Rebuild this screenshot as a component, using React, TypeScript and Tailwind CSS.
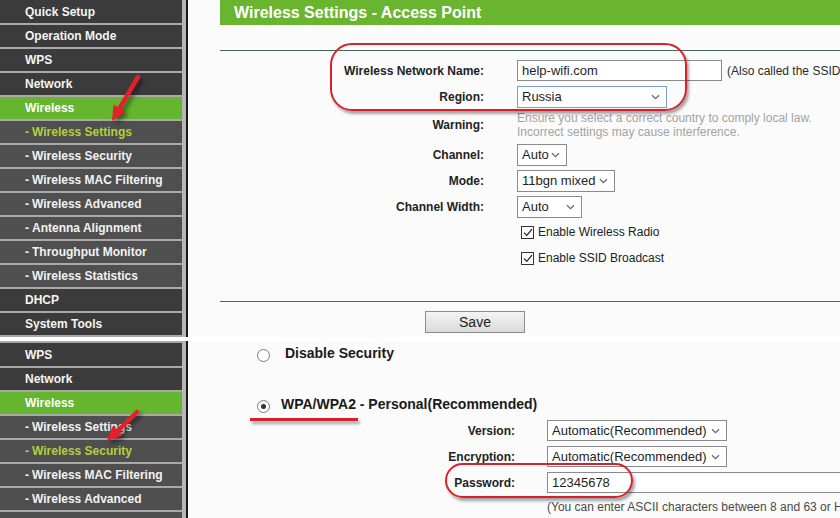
import type { ReactNode } from 'react'

type MenuItem = { label: string; kind: 'main' | 'sub' | 'open'; active?: boolean }

const TOP_MENU: MenuItem[] = [
  { label: 'Quick Setup', kind: 'main' },
  { label: 'Operation Mode', kind: 'main' },
  { label: 'WPS', kind: 'main' },
  { label: 'Network', kind: 'main' },
  { label: 'Wireless', kind: 'open' },
  { label: 'Wireless Settings', kind: 'sub', active: true },
  { label: 'Wireless Security', kind: 'sub' },
  { label: 'Wireless MAC Filtering', kind: 'sub' },
  { label: 'Wireless Advanced', kind: 'sub' },
  { label: 'Antenna Alignment', kind: 'sub' },
  { label: 'Throughput Monitor', kind: 'sub' },
  { label: 'Wireless Statistics', kind: 'sub' },
  { label: 'DHCP', kind: 'main' },
  { label: 'System Tools', kind: 'main' },
]

// last row only peeks in at the bottom edge
const BOTTOM_MENU: MenuItem[] = [
  { label: 'WPS', kind: 'main' },
  { label: 'Network', kind: 'main' },
  { label: 'Wireless', kind: 'open' },
  { label: 'Wireless Settings', kind: 'sub' },
  { label: 'Wireless Security', kind: 'sub', active: true },
  { label: 'Wireless MAC Filtering', kind: 'sub' },
  { label: 'Wireless Advanced', kind: 'sub' },
  { label: '', kind: 'sub' },
]

function Sidebar({ items, topRule }: { items: MenuItem[]; topRule?: boolean }) {
  return (
    <div className="flex shrink-0 h-full">
      <div className={`w-[182px] bg-[#3b3b3b] pt-[1px] ${topRule ? 'border-t-2 border-[#a9a9a9]' : ''}`}>
        {items.map((it, i) => (
          <div
            key={i}
            className={`h-[24px] border-b-2 border-[#a9a9a9] pl-[25px] flex items-center text-[12px] font-bold whitespace-nowrap ${
              it.kind === 'open' ? 'bg-[#66b52f] text-white' : it.kind === 'sub' ? 'bg-[#4f4f4f]' : 'bg-[#3b3b3b] text-[#f4f4f4]'
            } ${it.active ? 'text-[#b3cf3c]' : it.kind === 'sub' ? 'text-[#f2f2f2]' : ''}`}
          >
            {it.kind === 'sub' && it.label ? <span className="mr-[3px]">-</span> : null}
            {it.label}
          </div>
        ))}
      </div>
      <div className="w-[4px] bg-[#b6b6b6]" />
      <div className="w-[2px] bg-[#161616]" />
    </div>
  )
}

function Chevron() {
  return (
    <svg width="9" height="6" viewBox="0 0 9 6" className="shrink-0">
      <path d="M1 1.2 L4.5 4.6 L8 1.2" fill="none" stroke="#666" strokeWidth="1.2" />
    </svg>
  )
}

function Select({ value, width, focus }: { value: string; width: number; focus?: boolean }) {
  return (
    <div
      style={{ width }}
      className={`h-full bg-white border flex items-center justify-between pl-[4px] pr-[6px] text-[13px] text-[#1e1e1e] ${
        focus ? 'border-[#7a9ed2]' : 'border-[#8a8a8a]'
      }`}
    >
      <span className="whitespace-nowrap">{value}</span>
      <Chevron />
    </div>
  )
}

function TextBox({ value, width }: { value: string; width: number }) {
  return (
    <div style={{ width }} className="h-full bg-white border border-[#8a8a8a] flex items-center pl-[4px] text-[13px] text-[#1e1e1e] whitespace-nowrap">
      {value}
    </div>
  )
}

function Row({ label, className, labelWidth, gap, children }: { label: string; className: string; labelWidth: string; gap: string; children?: ReactNode }) {
  return (
    <div className={`flex items-center ${className}`}>
      <div className={`${labelWidth} ${gap} text-right text-[12px] font-bold text-[#222] whitespace-nowrap`}>{label}</div>
      <div className="flex items-center h-full">{children}</div>
    </div>
  )
}

function Check({ label, className }: { label: string; className: string }) {
  return (
    <div className={`flex items-center h-[20px] pl-[301px] ${className}`}>
      <div className="w-[13px] h-[13px] bg-white border border-[#333] flex items-center justify-center">
        <svg width="10" height="9" viewBox="0 0 10 9">
          <path d="M1 4.6 L3.8 7.4 L9 1.2" fill="none" stroke="#222" strokeWidth="1.3" />
        </svg>
      </div>
      <span className="ml-[4px] text-[12px] text-[#222]">{label}</span>
    </div>
  )
}

function Radio({ checked }: { checked?: boolean }) {
  return (
    <div className="w-[13px] h-[13px] rounded-full border-[1.5px] border-[#7a7a7a] bg-white flex items-center justify-center shrink-0">
      {checked ? <div className="w-[5px] h-[5px] rounded-full bg-[#333]" /> : null}
    </div>
  )
}

// red marker arrow: shaft from tail to the base of a triangular head at the tip
function Arrow({ x1, y1, x2, y2 }: { x1: number; y1: number; x2: number; y2: number }) {
  const dx = x2 - x1
  const dy = y2 - y1
  const len = Math.hypot(dx, dy)
  const ux = dx / len
  const uy = dy / len
  const bx = x2 - ux * 15
  const by = y2 - uy * 15
  const nx = -uy * 7
  const ny = ux * 7
  return (
    <g>
      <line x1={x1} y1={y1} x2={bx} y2={by} stroke="#e5202b" strokeWidth="4.5" strokeLinecap="round" />
      <polygon points={`${x2},${y2} ${bx + nx},${by + ny} ${bx - nx},${by - ny}`} fill="#e5202b" />
    </g>
  )
}

export default function App() {
  return (
    <div className="relative w-[840px] h-[518px] overflow-hidden bg-white font-['Liberation_Sans',Arial,sans-serif]">
      {/* Wireless settings page */}
      <div className="flex h-[337px] overflow-hidden">
        <Sidebar items={TOP_MENU} />
        <div className="flex-1 bg-[#fbfbfb] pl-[32px]">
          <div className="h-[25px] bg-[#69b52f] pl-[14px] flex items-center text-white text-[16px] font-bold">
            Wireless Settings - Access Point
          </div>
          <div className="mt-[25px] h-px bg-[#3b6f5c]" />

          <Row label="Wireless Network Name:" className="mt-[9px] h-[21px]" labelWidth="w-[264px]" gap="mr-[33px]">
            <TextBox value="help-wifi.com" width={205} />
            <span className="ml-[5px] text-[12px] text-[#2a2a2a] whitespace-nowrap">(Also called the SSID)</span>
          </Row>
          <Row label="Region:" className="mt-[5px] h-[22px]" labelWidth="w-[264px]" gap="mr-[33px]">
            <Select value="Russia" width={150} focus />
          </Row>
          <div className="mt-[3px] flex items-center">
            <div className="w-[264px] mr-[33px] text-right text-[12px] font-bold text-[#222]">Warning:</div>
            <div className="text-[12px] leading-[14px] text-[#a3a3a3] whitespace-nowrap">
              <div>Ensure you select a correct country to comply local law.</div>
              <div>Incorrect settings may cause interference.</div>
            </div>
          </div>
          <Row label="Channel:" className="mt-[5px] h-[22px]" labelWidth="w-[264px]" gap="mr-[33px]">
            <Select value="Auto" width={50} />
          </Row>
          <Row label="Mode:" className="mt-[4px] h-[22px]" labelWidth="w-[264px]" gap="mr-[33px]">
            <Select value="11bgn mixed" width={98} />
          </Row>
          <Row label="Channel Width:" className="mt-[4px] h-[22px]" labelWidth="w-[264px]" gap="mr-[33px]">
            <Select value="Auto" width={65} />
          </Row>
          <Check label="Enable Wireless Radio" className="mt-[4px]" />
          <Check label="Enable SSID Broadcast" className="mt-[6px]" />

          <div className="mt-[33px] h-px bg-[#3b6f5c]" />
          <div className="mt-[9px] ml-[205px] w-[100px] h-[22px] border border-[#8c8c8c] bg-gradient-to-b from-[#f4f4f4] to-[#dadada] flex items-center justify-center text-[14px] text-[#222]">
            Save
          </div>
        </div>
      </div>

      <div className="h-[4px] bg-white" />

      {/* Wireless security page */}
      <div className="flex h-[177px]">
        <Sidebar items={BOTTOM_MENU} topRule />
        <div className="flex-1 bg-[#fbfbfb] pt-[4px]">
          <div className="h-[20px] flex items-center pl-[69px]">
            <Radio />
            <span className="ml-[15px] text-[14px] font-bold text-[#1a1a1a] -mt-[3px]">Disable Security</span>
          </div>
          <div className="mt-[31px] h-[20px] flex items-center pl-[69px]">
            <Radio checked />
            <span className="ml-[11px] text-[14px] font-bold text-[#1a1a1a] -mt-[3px]">WPA/WPA2 - Personal(Recommended)</span>
          </div>
          <Row label="Version:" className="mt-[4px] h-[21px]" labelWidth="w-[327px]" gap="mr-[32px]">
            <Select value="Automatic(Recommended)" width={180} />
          </Row>
          <Row label="Encryption:" className="mt-[5px] h-[21px]" labelWidth="w-[327px]" gap="mr-[32px]">
            <Select value="Automatic(Recommended)" width={180} />
          </Row>
          <Row label="Password:" className="mt-[5px] h-[21px]" labelWidth="w-[327px]" gap="mr-[32px]">
            <TextBox value="12345678" width={320} />
          </Row>
          <div className="mt-[7px] pl-[359px] text-[12px] leading-[14px] text-[#4a4a4a] whitespace-nowrap">
            (You can enter ASCII characters between 8 and 63 or Hexadecimal characters between 8 and 64.)
          </div>
        </div>
      </div>

      {/* red markup on top of the screenshots */}
      <div className="absolute left-[330px] top-[43px] w-[357px] h-[68px] rounded-[22px] border-2 border-[#d8202c] shadow-[2px_3px_3px_rgba(0,0,0,0.35)]" />
      <div className="absolute left-[445px] top-[463px] w-[188px] h-[35px] rounded-full border-2 border-[#d8202c] shadow-[2px_3px_3px_rgba(0,0,0,0.35)]" />
      <div className="absolute left-[250px] top-[418px] w-[108px] h-[3px] bg-[#d8202c] shadow-[2px_3px_3px_rgba(0,0,0,0.35)]" />
      <svg className="absolute inset-0 pointer-events-none" width="840" height="518" style={{ filter: 'drop-shadow(3px 3px 2px rgba(0,0,0,0.45))' }}>
        <Arrow x1={138} y1={77} x2={112} y2={121} />
        <Arrow x1={137} y1={412} x2={107} y2={441} />
      </svg>
    </div>
  )
}
